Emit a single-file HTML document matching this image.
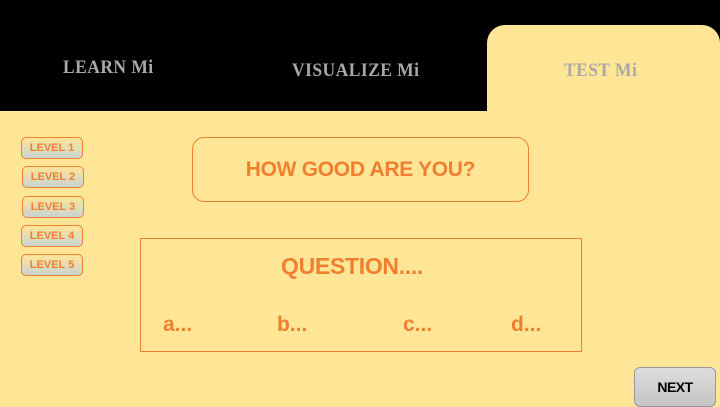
<!DOCTYPE html>
<html><head><meta charset="utf-8"><style>
*{margin:0;padding:0;box-sizing:border-box}
body{width:720px;height:405px;overflow:hidden;background:#FFE596;position:relative;font-family:"Liberation Sans",sans-serif}
.top{position:absolute;left:0;top:0;width:720px;height:111px;background:#000}
.tab{position:absolute;left:487px;top:25px;width:233px;height:90px;background:#FFE596;border-radius:18px 18px 0 0}
.t{position:absolute;font-family:"Liberation Serif",serif;font-weight:bold;color:#a9a9a9;font-size:19px;transform-origin:left top;transform:scaleX(0.92)}
.lv{position:absolute;width:62px;height:22px;border:1px solid #F08030;border-radius:5px;background:linear-gradient(#FFE596,#C8D4D4);color:#F08030;font-weight:bold;font-size:11px;text-align:center;line-height:20px}
.box{position:absolute;border:1px solid #F08030;color:#F08030;font-weight:bold}
.next{position:absolute;left:634px;top:367px;width:82px;height:40px;border:1px solid #999;border-radius:6px;background:linear-gradient(#ddd,#c4c4c4);font-weight:bold;font-size:14px;text-align:center;line-height:38px;color:#000;letter-spacing:-0.5px}
</style></head><body>
<div class="top"></div><div class="tab"></div>
<div class="t" style="left:63px;top:57px;letter-spacing:0.5px">LEARN Mi</div>
<div class="t" style="left:292px;top:60px;letter-spacing:0.5px">VISUALIZE Mi</div>
<div class="t" style="left:564px;top:60px;letter-spacing:0.5px">TEST Mi</div>
<div class="lv" style="left:21px;top:137px">LEVEL 1</div>
<div class="lv" style="left:22px;top:166px">LEVEL 2</div>
<div class="lv" style="left:22px;top:196px">LEVEL 3</div>
<div class="lv" style="left:21px;top:225px">LEVEL 4</div>
<div class="lv" style="left:21px;top:254px">LEVEL 5</div>
<div class="box" style="left:192px;top:137px;width:337px;height:65px;border-radius:12px;font-size:21px;text-align:center;line-height:63px;letter-spacing:-0.3px">HOW GOOD ARE YOU?</div>
<div class="box" style="left:140px;top:238px;width:442px;height:114px">
<div style="position:absolute;left:140px;top:14px;font-size:23px;letter-spacing:-0.3px">QUESTION....</div>
<div style="position:absolute;left:22px;top:74px;font-size:21px">a...</div>
<div style="position:absolute;left:136px;top:74px;font-size:21px">b...</div>
<div style="position:absolute;left:262px;top:74px;font-size:21px">c...</div>
<div style="position:absolute;left:370px;top:74px;font-size:21px">d...</div>
</div>
<div class="next">NEXT</div>
</body></html>
